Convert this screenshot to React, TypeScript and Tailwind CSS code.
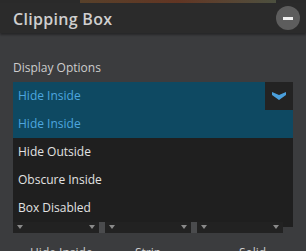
import React from 'react';

const options = ['Hide Inside', 'Hide Outside', 'Obscure Inside', 'Box Disabled'];

const MiniSelect: React.FC = () => (
    <div className="relative h-[11px] w-[86px] bg-[#222222]">
        <span className="absolute left-[4px] top-[3px] h-0 w-0 border-x-[3px] border-t-[4px] border-x-transparent border-t-[#8a8a8a]" />
        <span className="absolute right-[4px] top-[3px] h-0 w-0 border-x-[3px] border-t-[4px] border-x-transparent border-t-[#8a8a8a]" />
    </div>
);

export default function App() {
    const selected = 'Hide Inside';

    return (
        <div className="relative h-[251px] w-[306px] overflow-hidden bg-[#3b3c3e] font-['Open_Sans',sans-serif]">
            {/* strip of the viewport image peeking above the panel */}
            <div className="h-[3px] bg-[#2a2a2a] pl-[80px]">
                <div className="h-full w-[196px] bg-gradient-to-r from-[#6b4a2a] via-[#7a3a20] to-[#5a6048] opacity-70" />
            </div>

            <div className="flex h-[30px] items-center justify-between bg-[#2b2b2b] pl-[13px] pr-[6px] shadow-[0_2px_2px_rgba(0,0,0,0.35)]">
                <span className="pt-[1px] text-[16px] font-semibold tracking-[0.3px] text-[#cfcfcf]">Clipping Box</span>
                <button className="flex h-[24px] w-[24px] items-center justify-center rounded-full bg-[#5d5d5d]">
                    <span className="h-[3px] w-[10px] bg-[#f0f0f0]" />
                </button>
            </div>

            <div className="px-[13px] pt-[26px]">
                <div className="text-[12px] leading-[17px] text-[#cdcdcd]">Display Options</div>

                <div className="mt-[6px] flex h-[28px] items-center bg-[#0e4962]">
                    <span className="flex-1 pl-[5px] text-[12px] text-[#4da6df]">{selected}</span>
                    <div className="flex h-full w-[28px] items-center justify-center bg-[#232323]">
                        <svg width="14" height="8" viewBox="0 0 14 8">
                            <path d="M0 0 L7 3 L14 0 L14 3 L7 8 L0 3 Z" fill="#4a9fdc" />
                        </svg>
                    </div>
                </div>

                <div className="bg-[#1f1f1f]">
                    {options.map(opt => (
                        <div
                            key={opt}
                            className={
                                opt === selected
                                    ? 'flex h-[28px] items-center bg-[#0e4962] pl-[5px] text-[12px] text-[#4da6df]'
                                    : 'flex h-[28px] items-center pl-[5px] text-[12px] text-[#e2e2e2]'
                            }
                        >
                            {opt}
                        </div>
                    ))}
                </div>

                <div className="flex h-[11px]">
                    <MiniSelect />
                    <div className="w-[6px] bg-[#4a4b4d]" />
                    <MiniSelect />
                    <div className="w-[6px] bg-[#4a4b4d]" />
                    <MiniSelect />
                    <div className="h-[5px] flex-1 bg-[#1f1f1f]" />
                </div>

                <div className="mt-[11px] flex text-[12px] text-[#cdcdcd]">
                    <span className="w-[90px] pl-[17px]">Hide Inside</span>
                    <span className="w-[100px] pl-[32px]">Strip</span>
                    <span className="pl-[36px]">Solid</span>
                </div>
            </div>
        </div>
    );
}
